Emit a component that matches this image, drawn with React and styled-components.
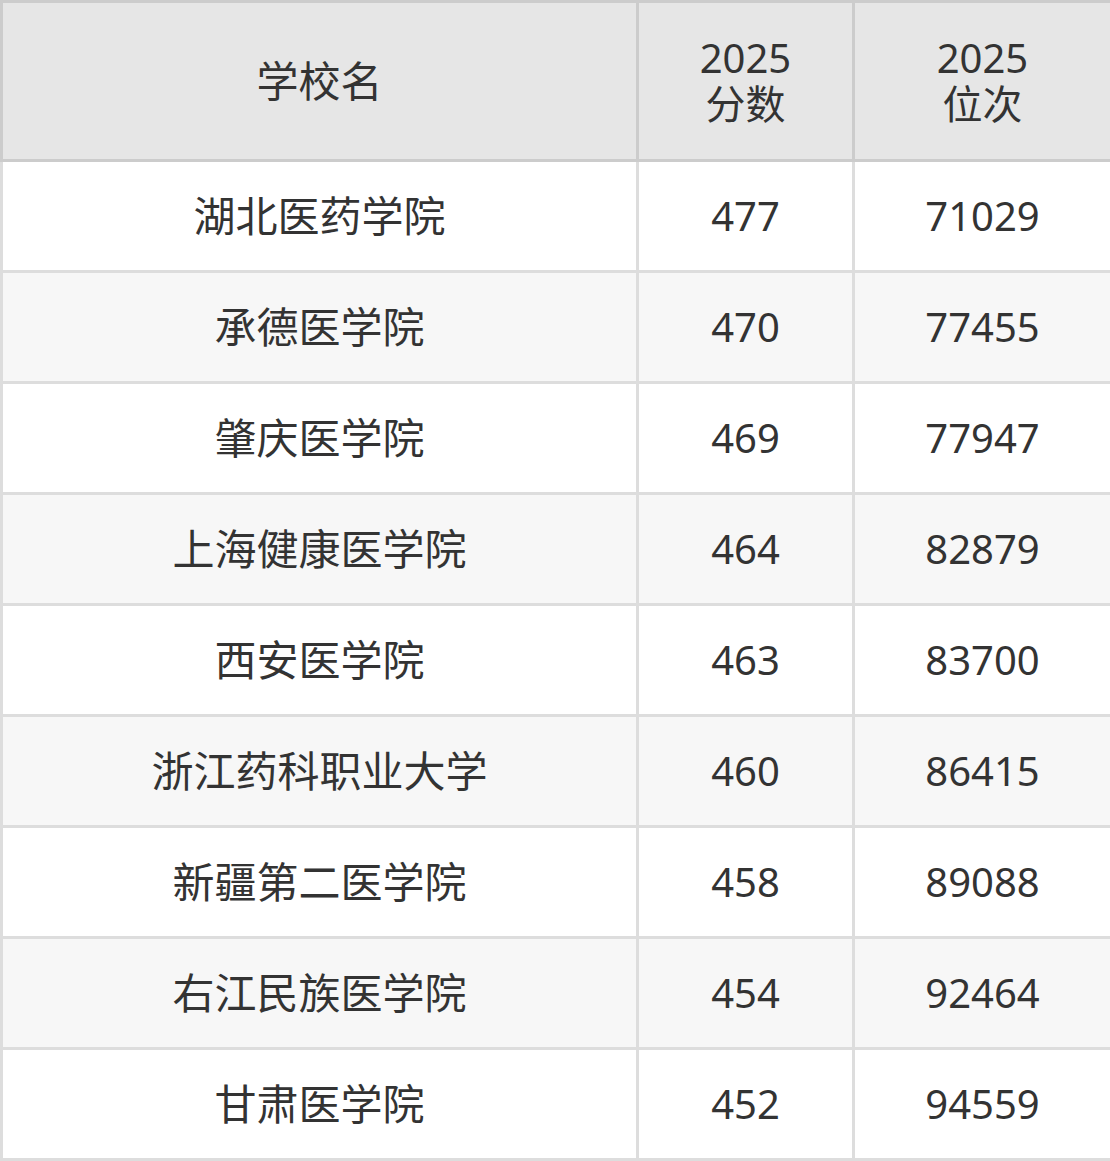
import styled, { createGlobalStyle } from "styled-components";

const GlobalStyle = createGlobalStyle`
    body{
        margin: 0;
        background: #fff;
        font-family: "Noto Sans", "Noto Sans CJK SC", sans-serif;
    }
`

const rows = [
    ["湖北医药学院", "477", "71029"],
    ["承德医学院", "470", "77455"],
    ["肇庆医学院", "469", "77947"],
    ["上海健康医学院", "464", "82879"],
    ["西安医学院", "463", "83700"],
    ["浙江药科职业大学", "460", "86415"],
    ["新疆第二医学院", "458", "89088"],
    ["右江民族医学院", "454", "92464"],
    ["甘肃医学院", "452", "94559"],
]

export default function App(){
    return(
        <>
        <GlobalStyle/>
        <Table>
            <colgroup>
                <col style={{width: 636}}/>
                <col style={{width: 216}}/>
                <col style={{width: 258}}/>
            </colgroup>
            <thead>
                <tr>
                    <Th $name>学校名</Th>
                    <Th>2025<br/>分数</Th>
                    <Th>2025<br/>位次</Th>
                </tr>
            </thead>
            <tbody>
                {rows.map((r, i) => (
                    <Row key={r[0]} $shaded={i % 2 === 1}>
                        <Td $name>{r[0]}</Td>
                        <Td>{r[1]}</Td>
                        <Td>{r[2]}</Td>
                    </Row>
                ))}
            </tbody>
        </Table>
        </>
    )
}

const Table = styled.table`
    width: 1110px;
    border-collapse: collapse;
    table-layout: fixed;
    color: #333;
    font-size: 40px;
`

const Th = styled.th`
    height: 156px;
    padding: 0;
    background: #e6e6e6;
    border: 3px solid #ccc;
    font-weight: 400;
    font-size: ${p => p.$name ? '42px' : '40px'};
    line-height: 46px;
    text-align: center;
    vertical-align: middle;
`

const Row = styled.tr`
    background: ${p => p.$shaded ? '#f7f7f7' : '#fff'};
`

const Td = styled.td`
    height: 108px;
    padding: 0;
    border: 3px solid #ddd;
    font-size: ${p => p.$name ? '42px' : '40px'};
    text-align: center;
    vertical-align: middle;
    line-height: 46px;
`
